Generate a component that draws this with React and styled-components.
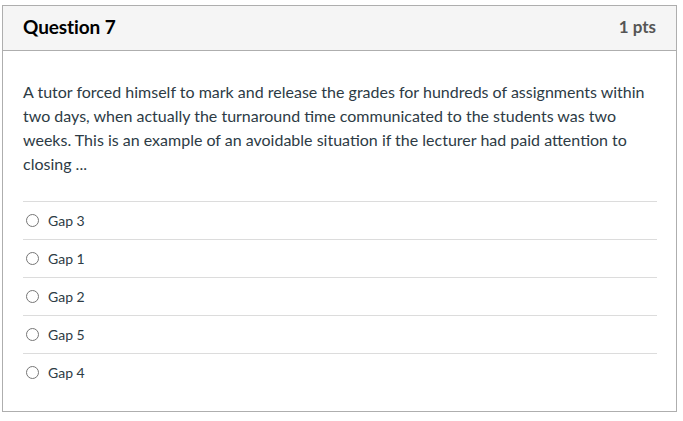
import React from 'react';
import styled, { createGlobalStyle } from 'styled-components';

const GlobalStyle = createGlobalStyle`
    body {
        margin: 0;
        background: #fff;
        font-family: Lato, "Noto Sans", sans-serif;
        color: #2d3b45;
    }
`;

const Page = styled.div`
    padding: 5px 6px 0 2px;
`;

const Card = styled.div`
    border: 1px solid #aeaeae;
    box-sizing: border-box;
    height: 407px;
`;

const Header = styled.div`
    display: flex;
    align-items: center;
    justify-content: space-between;
    box-sizing: border-box;
    height: 45px;
    padding: 0 20px 3px;
    background: #f5f5f5;
    border-bottom: 1px solid #aeaeae;
    h2 {
        margin: 0;
        font-size: 19px;
        font-weight: 700;
        color: #000;
        letter-spacing: -0.1px;
    }
`;

const Points = styled.span`
    font-size: 17px;
    font-weight: 700;
    color: #555;
`;

const Body = styled.div`
    padding: 29px 19px 20px 20px;
`;

const Prompt = styled.p`
    margin: 0 0 25px;
    font-size: 16px;
    line-height: 24px;
    color: #2d3b45;
`;

const Answers = styled.ul`
    list-style: none;
    margin: 0;
    padding: 0;
`;

const Answer = styled.li`
    display: flex;
    align-items: center;
    height: 37px;
    padding-bottom: 1px;
    box-sizing: border-box;
    height: 38px;
    border-top: 1px solid #dcdcdc;
    font-size: 14px;
    color: #2d3b45;
`;

const Radio = styled.span`
    width: 11px;
    height: 11px;
    border: 1px solid #767676;
    border-radius: 50%;
    margin: 0 9px 0 3px;
    flex-shrink: 0;
`;

const answers = ['Gap 3', 'Gap 1', 'Gap 2', 'Gap 5', 'Gap 4'];

const App = () => (
    <>
        <GlobalStyle />
        <Page>
            <Card>
                <Header>
                    <h2>Question 7</h2>
                    <Points>1 pts</Points>
                </Header>
                <Body>
                    <Prompt>
                        A tutor forced himself to mark and release the grades for hundreds of assignments within
                        two days, when actually the turnaround time communicated to the students was two
                        weeks. This is an example of an avoidable situation if the lecturer had paid attention to
                        closing ...
                    </Prompt>
                    <Answers>
                        {answers.map((a) => (
                            <Answer key={a}>
                                <Radio />
                                {a}
                            </Answer>
                        ))}
                    </Answers>
                </Body>
            </Card>
        </Page>
    </>
);

export default App;
